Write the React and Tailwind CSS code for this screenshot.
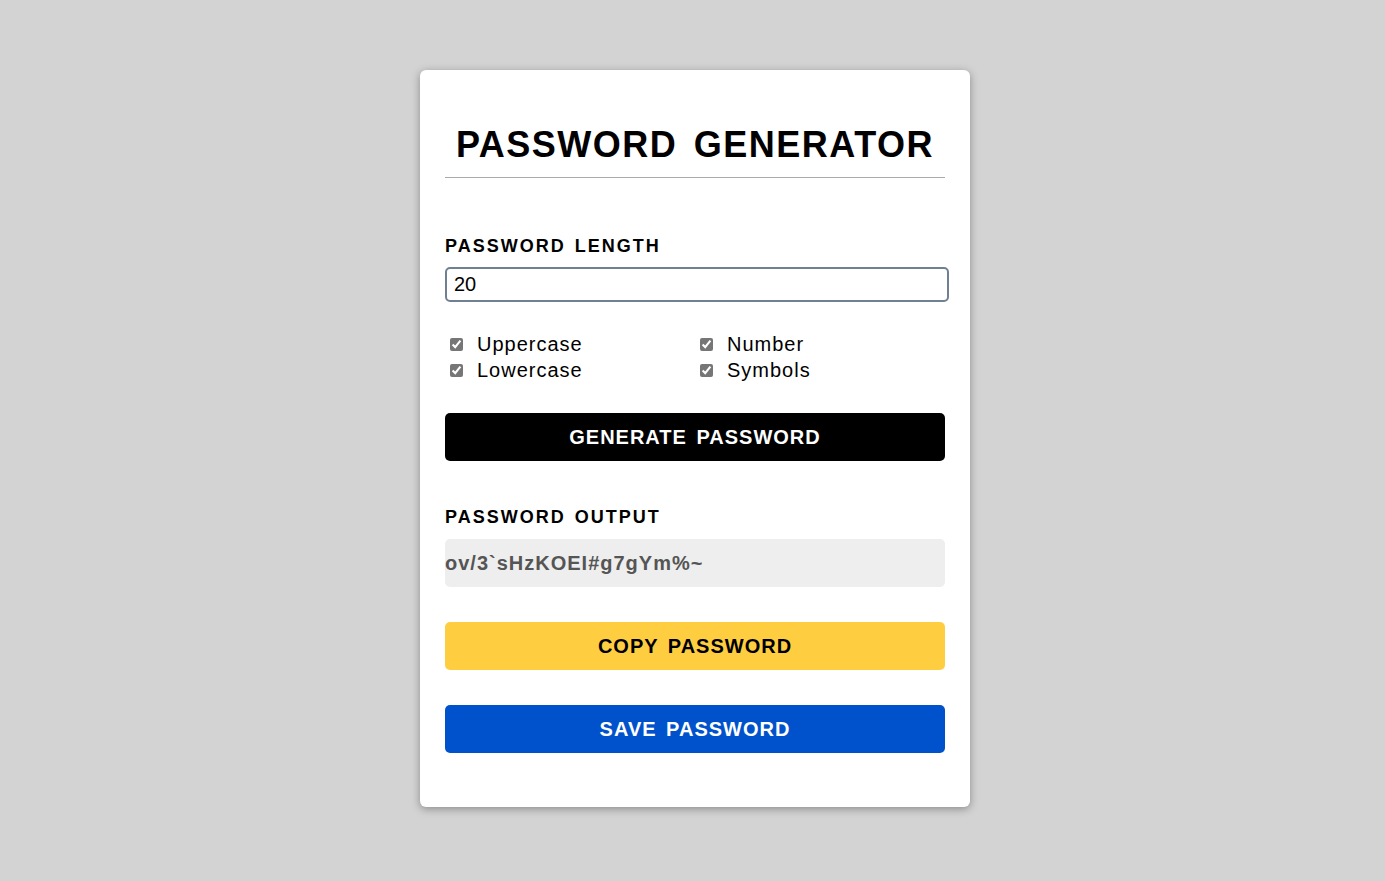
export default function App() {
  const font = { fontFamily: '"Liberation Sans", Arial, sans-serif' };
  const Check = ({ label }) => (
    <label className="flex items-center h-[26px] text-[20px] tracking-[1px] text-black">
      <input type="checkbox" defaultChecked className="w-[13px] h-[13px] ml-[5px] mr-[14px] accent-[#767676]" />
      {label}
    </label>
  );
  return (
    <div className="min-h-[881px] w-full bg-[#d3d3d3] flex justify-center pl-[5px]" style={font}>
      <div className="mt-[70px] mb-[74px] w-[550px] h-[737px] bg-white rounded-[6px] shadow-[0_2px_8px_rgba(0,0,0,0.35)] px-[25px] pt-[54px]">
        <h1 className="text-[36px] leading-[41px] font-bold text-black text-center tracking-[1.5px] [word-spacing:5px] pb-[12px] border-b border-[#aaaaaa]">
          PASSWORD GENERATOR
        </h1>
        <div className="mt-[58px] text-[18px] leading-[21px] font-bold tracking-[2px] [word-spacing:2px] text-black">PASSWORD LENGTH</div>
        <input
          type="text"
          defaultValue="20"
          className="mt-[10px] w-[504px] h-[35px] border-2 border-[#708090] rounded-[5px] px-[7px] text-[20px] text-black outline-none"
        />
        <div className="mt-[29px] grid grid-cols-2 w-[500px]">
          <div className="flex flex-col">
            <Check label="Uppercase" />
            <Check label="Lowercase" />
          </div>
          <div className="flex flex-col">
            <Check label="Number" />
            <Check label="Symbols" />
          </div>
        </div>
        <button className="mt-[30px] w-[500px] h-[48px] bg-black rounded-[5px] text-white text-[20px] font-bold tracking-[1px] [word-spacing:3px] block">
          GENERATE PASSWORD
        </button>
        <div className="mt-[46px] text-[18px] leading-[21px] font-bold tracking-[2px] [word-spacing:2px] text-black">PASSWORD OUTPUT</div>
        <div className="mt-[11px] w-[500px] h-[48px] bg-[#eeeeee] rounded-[5px] flex items-center text-[20px] font-bold text-[#555555] tracking-[1px]">
          ov/3`sHzKOEI#g7gYm%~
        </div>
        <button className="mt-[35px] w-[500px] h-[48px] bg-[#ffce40] rounded-[5px] text-black text-[20px] font-bold tracking-[1px] [word-spacing:3px] block">
          COPY PASSWORD
        </button>
        <button className="mt-[35px] w-[500px] h-[48px] bg-[#0052cc] rounded-[5px] text-white text-[20px] font-bold tracking-[1px] [word-spacing:3px] block">
          SAVE PASSWORD
        </button>
      </div>
    </div>
  );
}
